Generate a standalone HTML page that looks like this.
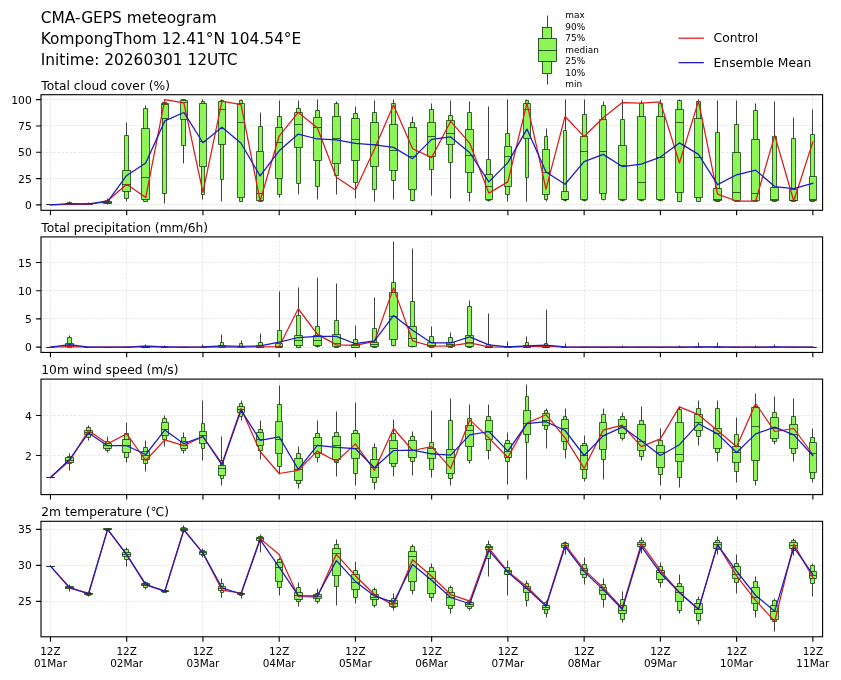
<!DOCTYPE html>
<html lang="en"><head><meta charset="utf-8"><title>CMA-GEPS meteogram</title>
<style>html,body{margin:0;padding:0;background:#fff}body{width:841px;height:680px;overflow:hidden}svg{display:block;will-change:transform}</style>
</head><body>
<svg width="841" height="680" viewBox="0 0 841 680" font-family="'DejaVu Sans', 'Liberation Sans', sans-serif">
<rect width="841" height="680" fill="#fff"/>
<g id="panel1">
<path d="M50.5 210.3V94.7M126.5 210.3V94.7M202.5 210.3V94.7M279.5 210.3V94.7M355.5 210.3V94.7M431.5 210.3V94.7M507.5 210.3V94.7M584.5 210.3V94.7M660.5 210.3V94.7M736.5 210.3V94.7M812.5 210.3V94.7M41 204.5H822.6M41 178.5H822.6M41 152.5H822.6M41 125.5H822.6M41 99.5H822.6" fill="none" stroke="#dcdcdc" stroke-width="0.6" stroke-dasharray="2.8 1.25"/>
<path d="M69.5 204.5V201.5M88.5 204.5V202.5M107.5 204.5V198.5M126.5 201.5V122.5M145.5 201.5V105.5M164.5 203.5V99.5M183.5 163.5V99.5M202.5 199.5V99.5M221.5 201.5V99.5M241.5 201.5V99.5M260.5 201.5V112.5M279.5 197.5V100.5M298.5 194.5V100.5M317.5 199.5V99.5M336.5 194.5V101.5M355.5 198.5V106.5M374.5 201.5V100.5M393.5 199.5V99.5M412.5 201.5V116.5M431.5 195.5V103.5M450.5 198.5V100.5M469.5 201.5V101.5M488.5 201.5V106.5M507.5 201.5V99.5M526.5 201.5V99.5M546.5 201.5V128.5M565.5 201.5V99.5M584.5 201.5V99.5M603.5 200.5V101.5M622.5 201.5V99.5M641.5 201.5V100.5M660.5 201.5V99.5M679.5 201.5V99.5M698.5 201.5V99.5M717.5 201.5V100.5M736.5 201.5V100.5M755.5 201.5V103.5M774.5 201.5V101.5M793.5 201.5V117.5M812.5 201.5V109.5" fill="none" stroke="#404040" stroke-width="1"/>
<path d="M48.5 204.5H52.5V204.5H48.5ZM67.5 202.5H71.5V204.5H67.5ZM86.5 203.5H90.5V204.5H86.5ZM105.5 200.5H109.5V203.5H105.5ZM124.5 135.5H128.5V198.5H124.5ZM143.5 108.5H147.5V201.5H143.5ZM162.5 102.5H166.5V193.5H162.5ZM181.5 99.5H185.5V145.5H181.5ZM201.5 101.5H204.5V194.5H201.5ZM220.5 100.5H223.5V179.5H220.5ZM239.5 100.5H242.5V201.5H239.5ZM258.5 126.5H262.5V201.5H258.5ZM277.5 116.5H281.5V194.5H277.5ZM296.5 108.5H300.5V183.5H296.5ZM315.5 110.5H319.5V186.5H315.5ZM334.5 103.5H338.5V175.5H334.5ZM353.5 113.5H357.5V182.5H353.5ZM372.5 112.5H376.5V189.5H372.5ZM391.5 103.5H395.5V180.5H391.5ZM410.5 122.5H414.5V200.5H410.5ZM429.5 109.5H433.5V169.5H429.5ZM448.5 115.5H452.5V162.5H448.5ZM467.5 112.5H471.5V192.5H467.5ZM486.5 159.5H490.5V200.5H486.5ZM505.5 133.5H509.5V194.5H505.5ZM525.5 100.5H528.5V177.5H525.5ZM544.5 136.5H547.5V199.5H544.5ZM563.5 130.5H566.5V200.5H563.5ZM582.5 114.5H586.5V200.5H582.5ZM601.5 105.5H605.5V199.5H601.5ZM620.5 119.5H624.5V200.5H620.5ZM639.5 103.5H643.5V200.5H639.5ZM658.5 103.5H662.5V200.5H658.5ZM677.5 100.5H681.5V201.5H677.5ZM696.5 101.5H700.5V201.5H696.5ZM715.5 132.5H719.5V201.5H715.5ZM734.5 124.5H738.5V201.5H734.5ZM753.5 110.5H757.5V201.5H753.5ZM772.5 136.5H776.5V201.5H772.5ZM791.5 138.5H795.5V201.5H791.5ZM810.5 134.5H814.5V201.5H810.5Z" fill="#8df558" stroke="#0c3408" stroke-width="0.75"/>
<path d="M46.5 204.5H54.5V204.5H46.5ZM65.5 203.5H73.5V204.5H65.5ZM84.5 203.5H92.5V204.5H84.5ZM103.5 201.5H111.5V203.5H103.5ZM122.5 170.5H130.5V191.5H122.5ZM141.5 128.5H149.5V199.5H141.5ZM161.5 103.5H168.5V118.5H161.5ZM180.5 100.5H187.5V119.5H180.5ZM199.5 103.5H206.5V166.5H199.5ZM218.5 101.5H225.5V144.5H218.5ZM237.5 103.5H244.5V197.5H237.5ZM256.5 151.5H263.5V200.5H256.5ZM275.5 127.5H282.5V178.5H275.5ZM294.5 112.5H302.5V147.5H294.5ZM313.5 117.5H321.5V160.5H313.5ZM332.5 116.5H340.5V163.5H332.5ZM351.5 118.5H359.5V160.5H351.5ZM370.5 122.5H378.5V166.5H370.5ZM389.5 124.5H397.5V170.5H389.5ZM408.5 127.5H416.5V189.5H408.5ZM427.5 122.5H435.5V156.5H427.5ZM446.5 120.5H454.5V144.5H446.5ZM465.5 129.5H473.5V172.5H465.5ZM485.5 174.5H492.5V199.5H485.5ZM504.5 146.5H511.5V186.5H504.5ZM523.5 103.5H530.5V138.5H523.5ZM542.5 149.5H549.5V194.5H542.5ZM561.5 191.5H568.5V199.5H561.5ZM580.5 136.5H587.5V199.5H580.5ZM599.5 119.5H606.5V193.5H599.5ZM618.5 145.5H626.5V199.5H618.5ZM637.5 116.5H645.5V199.5H637.5ZM656.5 116.5H664.5V199.5H656.5ZM675.5 109.5H683.5V192.5H675.5ZM694.5 118.5H702.5V197.5H694.5ZM713.5 188.5H721.5V200.5H713.5ZM732.5 152.5H740.5V200.5H732.5ZM751.5 139.5H759.5V200.5H751.5ZM770.5 187.5H778.5V200.5H770.5ZM789.5 189.5H797.5V200.5H789.5ZM809.5 176.5H816.5V200.5H809.5Z" fill="#8df558" stroke="#0c3408" stroke-width="0.75"/>
<path d="M46.5 204.5H54.5M65.5 203.5H73.5M84.5 204.5H92.5M103.5 202.5H111.5M122.5 184.5H130.5M141.5 177.5H149.5M161.5 104.5H168.5M180.5 102.5H187.5M199.5 141.5H206.5M218.5 109.5H225.5M237.5 122.5H244.5M256.5 193.5H263.5M275.5 142.5H282.5M294.5 124.5H302.5M313.5 127.5H321.5M332.5 138.5H340.5M351.5 139.5H359.5M370.5 144.5H378.5M389.5 150.5H397.5M408.5 156.5H416.5M427.5 136.5H435.5M446.5 133.5H454.5M465.5 155.5H473.5M485.5 186.5H492.5M504.5 156.5H511.5M523.5 109.5H530.5M542.5 172.5H549.5M561.5 199.5H568.5M580.5 151.5H587.5M599.5 151.5H606.5M618.5 165.5H626.5M637.5 182.5H645.5M656.5 157.5H664.5M675.5 122.5H683.5M694.5 157.5H702.5M713.5 199.5H721.5M732.5 192.5H740.5M751.5 193.5H759.5M770.5 199.5H778.5M789.5 200.5H797.5M809.5 199.5H816.5" fill="none" stroke="#0c3408" stroke-width="0.75"/>
<polyline points="50.45,204.9 69.51,204.27 88.57,204.37 107.63,200.69 126.69,184.26 145.75,197.53 164.81,99.6 183.87,102.76 202.93,192.26 221.99,101.18 241.05,104.55 260.11,201 279.17,136.03 298.23,112.45 317.29,127.72 336.35,177.31 355.41,189.95 374.47,149.09 393.53,105.08 412.59,148.78 431.65,157.62 450.71,121.29 469.77,143.3 488.83,193.11 507.89,181.84 526.95,103.18 546.01,189.11 565.07,116.45 584.13,136.56 603.19,117.71 622.25,102.55 641.31,103.18 660.37,101.92 679.43,162.99 698.49,101.18 717.55,194.05 736.61,201 755.67,201 774.73,135.4 793.79,201 812.85,141.93" fill="none" stroke="#dc1a1a" stroke-width="1.25" stroke-linejoin="round" stroke-linecap="square"/>
<polyline points="50.45,204.9 69.51,203.64 88.57,203.85 107.63,201.53 126.69,175.42 145.75,162.99 164.81,120.87 183.87,112.45 202.93,142.77 221.99,127.19 241.05,143.3 260.11,175.94 279.17,150.78 298.23,134.03 317.29,138.98 336.35,139.93 355.41,143.3 374.47,144.88 393.53,147.41 412.59,158.67 431.65,139.4 450.71,136.98 469.77,152.78 488.83,181.84 507.89,162.57 526.95,129.08 546.01,172.05 565.07,184.26 584.13,161.62 603.19,154.36 622.25,166.57 641.31,164.15 660.37,157.09 679.43,142.88 698.49,154.36 717.55,184.58 736.61,174.78 755.67,170.15 774.73,186.58 793.79,188.58 812.85,183.21" fill="none" stroke="#1a1ac8" stroke-width="1.25" stroke-linejoin="round" stroke-linecap="square"/>
<rect x="41" y="94.7" width="781.6" height="115.6" fill="none" stroke="#000" stroke-width="1.11"/>
<path d="M50.45 210.3v4.86M126.69 210.3v4.86M202.93 210.3v4.86M279.17 210.3v4.86M355.41 210.3v4.86M431.65 210.3v4.86M507.89 210.3v4.86M584.13 210.3v4.86M660.37 210.3v4.86M736.61 210.3v4.86M812.85 210.3v4.86M41 204.9h-4.86M41 178.58h-4.86M41 152.25h-4.86M41 125.93h-4.86M41 99.6h-4.86" fill="none" stroke="#000" stroke-width="1.11"/>
<g font-size="10.75" text-anchor="end" fill="#000">
<text x="31.8" y="208.95">0</text>
<text x="31.8" y="182.63">25</text>
<text x="31.8" y="156.3">50</text>
<text x="31.8" y="129.98">75</text>
<text x="31.8" y="103.65">100</text>
</g>
<text x="41.3" y="89.6" font-size="12.25" fill="#000">Total cloud cover (%)</text>
</g>
<g id="panel2">
<path d="M50.5 352.45V236.9M126.5 352.45V236.9M202.5 352.45V236.9M279.5 352.45V236.9M355.5 352.45V236.9M431.5 352.45V236.9M507.5 352.45V236.9M584.5 352.45V236.9M660.5 352.45V236.9M736.5 352.45V236.9M812.5 352.45V236.9M41 347.5H822.6M41 318.5H822.6M41 290.5H822.6M41 262.5H822.6" fill="none" stroke="#dcdcdc" stroke-width="0.6" stroke-dasharray="2.8 1.25"/>
<path d="M69.5 347.5V335.5M145.5 347.5V344.5M164.5 347.5V345.5M202.5 347.5V344.5M221.5 347.5V334.5M241.5 347.5V340.5M260.5 347.5V333.5M279.5 347.5V291.5M298.5 347.5V287.5M317.5 347.5V277.5M336.5 347.5V283.5M355.5 347.5V325.5M374.5 347.5V297.5M393.5 346.5V241.5M412.5 347.5V248.5M431.5 347.5V326.5M450.5 347.5V332.5M469.5 347.5V300.5M488.5 347.5V313.5M507.5 347.5V341.5M526.5 347.5V336.5M546.5 347.5V309.5M565.5 347.5V343.5M622.5 347.5V345.5M679.5 347.5V345.5M698.5 347.5V342.5M717.5 347.5V342.5M755.5 347.5V345.5M774.5 347.5V344.5" fill="none" stroke="#404040" stroke-width="1"/>
<path d="M48.5 347.5H52.5V347.5H48.5ZM67.5 337.5H71.5V347.5H67.5ZM86.5 347.5H90.5V347.5H86.5ZM105.5 347.5H109.5V347.5H105.5ZM124.5 347.5H128.5V347.5H124.5ZM143.5 346.5H147.5V347.5H143.5ZM162.5 346.5H166.5V347.5H162.5ZM181.5 347.5H185.5V347.5H181.5ZM201.5 346.5H204.5V347.5H201.5ZM220.5 342.5H223.5V347.5H220.5ZM239.5 343.5H242.5V347.5H239.5ZM258.5 342.5H262.5V347.5H258.5ZM277.5 330.5H281.5V347.5H277.5ZM296.5 315.5H300.5V347.5H296.5ZM315.5 326.5H319.5V346.5H315.5ZM334.5 320.5H338.5V347.5H334.5ZM353.5 339.5H357.5V347.5H353.5ZM372.5 328.5H376.5V347.5H372.5ZM391.5 282.5H395.5V345.5H391.5ZM410.5 301.5H414.5V346.5H410.5ZM429.5 336.5H433.5V347.5H429.5ZM448.5 337.5H452.5V347.5H448.5ZM467.5 306.5H471.5V347.5H467.5ZM486.5 344.5H490.5V347.5H486.5ZM505.5 346.5H509.5V347.5H505.5ZM525.5 342.5H528.5V347.5H525.5ZM544.5 343.5H547.5V347.5H544.5ZM563.5 346.5H566.5V347.5H563.5ZM582.5 347.5H586.5V347.5H582.5ZM601.5 347.5H605.5V347.5H601.5ZM620.5 347.5H624.5V347.5H620.5ZM639.5 347.5H643.5V347.5H639.5ZM658.5 347.5H662.5V347.5H658.5ZM677.5 347.5H681.5V347.5H677.5ZM696.5 346.5H700.5V347.5H696.5ZM715.5 346.5H719.5V347.5H715.5ZM734.5 347.5H738.5V347.5H734.5ZM753.5 347.5H757.5V347.5H753.5ZM772.5 347.5H776.5V347.5H772.5ZM791.5 347.5H795.5V347.5H791.5ZM810.5 347.5H814.5V347.5H810.5Z" fill="#8df558" stroke="#0c3408" stroke-width="0.75"/>
<path d="M46.5 347.5H54.5V347.5H46.5ZM65.5 343.5H73.5V346.5H65.5ZM84.5 347.5H92.5V347.5H84.5ZM103.5 347.5H111.5V347.5H103.5ZM122.5 347.5H130.5V347.5H122.5ZM141.5 346.5H149.5V347.5H141.5ZM161.5 347.5H168.5V347.5H161.5ZM180.5 347.5H187.5V347.5H180.5ZM199.5 347.5H206.5V347.5H199.5ZM218.5 345.5H225.5V347.5H218.5ZM237.5 346.5H244.5V347.5H237.5ZM256.5 345.5H263.5V347.5H256.5ZM275.5 343.5H282.5V347.5H275.5ZM294.5 335.5H302.5V345.5H294.5ZM313.5 335.5H321.5V345.5H313.5ZM332.5 334.5H340.5V346.5H332.5ZM351.5 344.5H359.5V347.5H351.5ZM370.5 342.5H378.5V346.5H370.5ZM389.5 292.5H397.5V339.5H389.5ZM408.5 326.5H416.5V346.5H408.5ZM427.5 342.5H435.5V346.5H427.5ZM446.5 342.5H454.5V346.5H446.5ZM465.5 335.5H473.5V346.5H465.5ZM485.5 346.5H492.5V347.5H485.5ZM504.5 347.5H511.5V347.5H504.5ZM523.5 345.5H530.5V347.5H523.5ZM542.5 346.5H549.5V347.5H542.5ZM561.5 347.5H568.5V347.5H561.5ZM580.5 347.5H587.5V347.5H580.5ZM599.5 347.5H606.5V347.5H599.5ZM618.5 347.5H626.5V347.5H618.5ZM637.5 347.5H645.5V347.5H637.5ZM656.5 347.5H664.5V347.5H656.5ZM675.5 347.5H683.5V347.5H675.5ZM694.5 347.5H702.5V347.5H694.5ZM713.5 347.5H721.5V347.5H713.5ZM732.5 347.5H740.5V347.5H732.5ZM751.5 347.5H759.5V347.5H751.5ZM770.5 347.5H778.5V347.5H770.5ZM789.5 347.5H797.5V347.5H789.5ZM809.5 347.5H816.5V347.5H809.5Z" fill="#8df558" stroke="#0c3408" stroke-width="0.75"/>
<path d="M46.5 347.5H54.5M65.5 345.5H73.5M84.5 347.5H92.5M103.5 347.5H111.5M122.5 347.5H130.5M141.5 347.5H149.5M161.5 347.5H168.5M180.5 347.5H187.5M199.5 347.5H206.5M218.5 347.5H225.5M237.5 347.5H244.5M256.5 347.5H263.5M275.5 346.5H282.5M294.5 340.5H302.5M313.5 340.5H321.5M332.5 343.5H340.5M351.5 345.5H359.5M370.5 344.5H378.5M389.5 316.5H397.5M408.5 338.5H416.5M427.5 345.5H435.5M446.5 344.5H454.5M465.5 342.5H473.5M485.5 347.5H492.5M504.5 347.5H511.5M523.5 347.5H530.5M542.5 347.5H549.5M561.5 347.5H568.5M580.5 347.5H587.5M599.5 347.5H606.5M618.5 347.5H626.5M637.5 347.5H645.5M656.5 347.5H664.5M675.5 347.5H683.5M694.5 347.5H702.5M713.5 347.5H721.5M732.5 347.5H740.5M751.5 347.5H759.5M770.5 347.5H778.5M789.5 347.5H797.5M809.5 347.5H816.5" fill="none" stroke="#0c3408" stroke-width="0.75"/>
<polyline points="50.45,347.1 69.51,346.54 88.57,347.1 107.63,347.1 126.69,347.1 145.75,345.97 164.81,346.99 183.87,347.1 202.93,347.1 221.99,347.1 241.05,347.1 260.11,346.82 279.17,346.54 298.23,308.75 317.29,334.13 336.35,344.84 355.41,345.41 374.47,341.46 393.53,287.88 412.59,340.9 431.65,346.25 450.71,345.97 469.77,342.98 488.83,346.93 507.89,347.1 526.95,346.54 546.01,346.25 565.07,347.1 584.13,347.1 603.19,347.1 622.25,347.1 641.31,347.1 660.37,347.1 679.43,347.1 698.49,347.1 717.55,347.1 736.61,347.1 755.67,347.1 774.73,347.1 793.79,347.1 812.85,347.1" fill="none" stroke="#dc1a1a" stroke-width="1.25" stroke-linejoin="round" stroke-linecap="square"/>
<polyline points="50.45,347.1 69.51,344.56 88.57,347.1 107.63,347.1 126.69,347.1 145.75,346.65 164.81,346.93 183.87,347.1 202.93,346.93 221.99,345.97 241.05,346.25 260.11,345.97 279.17,342.02 298.23,337.51 317.29,336.38 336.35,336.38 355.41,343.72 374.47,340.9 393.53,315.52 412.59,330.18 431.65,342.98 450.71,342.98 469.77,336.95 488.83,344.84 507.89,346.82 526.95,345.97 546.01,345.13 565.07,346.93 584.13,347.1 603.19,347.1 622.25,347.04 641.31,347.1 660.37,347.1 679.43,347.04 698.49,346.93 717.55,346.93 736.61,347.1 755.67,347.04 774.73,346.99 793.79,347.1 812.85,347.1" fill="none" stroke="#1a1ac8" stroke-width="1.25" stroke-linejoin="round" stroke-linecap="square"/>
<rect x="41" y="236.9" width="781.6" height="115.55" fill="none" stroke="#000" stroke-width="1.11"/>
<path d="M50.45 352.45v4.86M126.69 352.45v4.86M202.93 352.45v4.86M279.17 352.45v4.86M355.41 352.45v4.86M431.65 352.45v4.86M507.89 352.45v4.86M584.13 352.45v4.86M660.37 352.45v4.86M736.61 352.45v4.86M812.85 352.45v4.86M41 347.1h-4.86M41 318.9h-4.86M41 290.7h-4.86M41 262.5h-4.86" fill="none" stroke="#000" stroke-width="1.11"/>
<g font-size="10.75" text-anchor="end" fill="#000">
<text x="31.8" y="351.15">0</text>
<text x="31.8" y="322.95">5</text>
<text x="31.8" y="294.75">10</text>
<text x="31.8" y="266.55">15</text>
</g>
<text x="41.3" y="231.8" font-size="12.25" fill="#000">Total precipitation (mm/6h)</text>
</g>
<g id="panel3">
<path d="M50.5 494.6V379.1M126.5 494.6V379.1M202.5 494.6V379.1M279.5 494.6V379.1M355.5 494.6V379.1M431.5 494.6V379.1M507.5 494.6V379.1M584.5 494.6V379.1M660.5 494.6V379.1M736.5 494.6V379.1M812.5 494.6V379.1M41 455.5H822.6M41 415.5H822.6" fill="none" stroke="#dcdcdc" stroke-width="0.6" stroke-dasharray="2.8 1.25"/>
<path d="M69.5 470.5V453.5M88.5 440.5V425.5M107.5 452.5V436.5M126.5 462.5V422.5M145.5 471.5V440.5M164.5 446.5V415.5M183.5 453.5V432.5M202.5 460.5V400.5M221.5 485.5V436.5M241.5 420.5V400.5M260.5 459.5V420.5M279.5 474.5V385.5M298.5 488.5V446.5M317.5 462.5V420.5M336.5 476.5V411.5M355.5 485.5V402.5M374.5 489.5V443.5M393.5 476.5V419.5M412.5 475.5V431.5M431.5 477.5V410.5M450.5 485.5V398.5M469.5 463.5V404.5M488.5 459.5V404.5M507.5 484.5V432.5M526.5 479.5V384.5M546.5 448.5V408.5M565.5 458.5V408.5M584.5 481.5V435.5M603.5 479.5V408.5M622.5 440.5V412.5M641.5 460.5V406.5M660.5 485.5V428.5M679.5 487.5V406.5M698.5 445.5V400.5M717.5 461.5V400.5M736.5 482.5V417.5M755.5 485.5V393.5M774.5 444.5V396.5M793.5 461.5V398.5M812.5 482.5V428.5" fill="none" stroke="#404040" stroke-width="1"/>
<path d="M48.5 477.5H52.5V477.5H48.5ZM67.5 456.5H71.5V463.5H67.5ZM86.5 427.5H90.5V437.5H86.5ZM105.5 441.5H109.5V450.5H105.5ZM124.5 433.5H128.5V457.5H124.5ZM143.5 447.5H147.5V463.5H143.5ZM162.5 418.5H166.5V439.5H162.5ZM181.5 437.5H185.5V450.5H181.5ZM201.5 423.5H204.5V448.5H201.5ZM220.5 460.5H223.5V478.5H220.5ZM239.5 403.5H242.5V416.5H239.5ZM258.5 429.5H262.5V450.5H258.5ZM277.5 404.5H281.5V466.5H277.5ZM296.5 453.5H300.5V483.5H296.5ZM315.5 433.5H319.5V457.5H315.5ZM334.5 432.5H338.5V462.5H334.5ZM353.5 430.5H357.5V473.5H353.5ZM372.5 447.5H376.5V482.5H372.5ZM391.5 433.5H395.5V466.5H391.5ZM410.5 436.5H414.5V461.5H410.5ZM429.5 442.5H433.5V469.5H429.5ZM448.5 420.5H452.5V478.5H448.5ZM467.5 418.5H471.5V460.5H467.5ZM486.5 416.5H490.5V450.5H486.5ZM505.5 440.5H509.5V461.5H505.5ZM525.5 396.5H528.5V442.5H525.5ZM544.5 410.5H547.5V429.5H544.5ZM563.5 416.5H566.5V449.5H563.5ZM582.5 443.5H586.5V478.5H582.5ZM601.5 414.5H605.5V459.5H601.5ZM620.5 416.5H624.5V438.5H620.5ZM639.5 420.5H643.5V456.5H639.5ZM658.5 440.5H662.5V474.5H658.5ZM677.5 409.5H681.5V477.5H677.5ZM696.5 408.5H700.5V436.5H696.5ZM715.5 408.5H719.5V452.5H715.5ZM734.5 434.5H738.5V471.5H734.5ZM753.5 406.5H757.5V480.5H753.5ZM772.5 412.5H776.5V441.5H772.5ZM791.5 416.5H795.5V453.5H791.5ZM810.5 437.5H814.5V478.5H810.5Z" fill="#8df558" stroke="#0c3408" stroke-width="0.75"/>
<path d="M46.5 477.5H54.5V477.5H46.5ZM65.5 457.5H73.5V462.5H65.5ZM84.5 430.5H92.5V434.5H84.5ZM103.5 443.5H111.5V448.5H103.5ZM122.5 439.5H130.5V452.5H122.5ZM141.5 451.5H149.5V459.5H141.5ZM161.5 422.5H168.5V435.5H161.5ZM180.5 441.5H187.5V448.5H180.5ZM199.5 431.5H206.5V443.5H199.5ZM218.5 465.5H225.5V475.5H218.5ZM237.5 406.5H244.5V412.5H237.5ZM256.5 432.5H263.5V445.5H256.5ZM275.5 421.5H282.5V453.5H275.5ZM294.5 458.5H302.5V480.5H294.5ZM313.5 437.5H321.5V453.5H313.5ZM332.5 436.5H340.5V459.5H332.5ZM351.5 433.5H359.5V458.5H351.5ZM370.5 459.5H378.5V477.5H370.5ZM389.5 440.5H397.5V463.5H389.5ZM408.5 440.5H416.5V457.5H408.5ZM427.5 448.5H435.5V458.5H427.5ZM446.5 449.5H454.5V473.5H446.5ZM465.5 425.5H473.5V446.5H465.5ZM485.5 420.5H492.5V439.5H485.5ZM504.5 443.5H511.5V457.5H504.5ZM523.5 410.5H530.5V434.5H523.5ZM542.5 413.5H549.5V425.5H542.5ZM561.5 419.5H568.5V441.5H561.5ZM580.5 445.5H587.5V469.5H580.5ZM599.5 422.5H606.5V449.5H599.5ZM618.5 419.5H626.5V433.5H618.5ZM637.5 424.5H645.5V450.5H637.5ZM656.5 445.5H664.5V467.5H656.5ZM675.5 422.5H683.5V461.5H675.5ZM694.5 414.5H702.5V430.5H694.5ZM713.5 428.5H721.5V448.5H713.5ZM732.5 446.5H740.5V462.5H732.5ZM751.5 407.5H759.5V460.5H751.5ZM770.5 417.5H778.5V438.5H770.5ZM789.5 424.5H797.5V448.5H789.5ZM809.5 442.5H816.5V472.5H809.5Z" fill="#8df558" stroke="#0c3408" stroke-width="0.75"/>
<path d="M46.5 477.5H54.5M65.5 460.5H73.5M84.5 432.5H92.5M103.5 445.5H111.5M122.5 445.5H130.5M141.5 455.5H149.5M161.5 429.5H168.5M180.5 445.5H187.5M199.5 435.5H206.5M218.5 468.5H225.5M237.5 409.5H244.5M256.5 439.5H263.5M275.5 439.5H282.5M294.5 469.5H302.5M313.5 445.5H321.5M332.5 445.5H340.5M351.5 448.5H359.5M370.5 467.5H378.5M389.5 448.5H397.5M408.5 450.5H416.5M427.5 453.5H435.5M446.5 457.5H454.5M465.5 430.5H473.5M485.5 431.5H492.5M504.5 451.5H511.5M523.5 423.5H530.5M542.5 420.5H549.5M561.5 428.5H568.5M580.5 455.5H587.5M599.5 435.5H606.5M618.5 426.5H626.5M637.5 441.5H645.5M656.5 452.5H664.5M675.5 454.5H683.5M694.5 422.5H702.5M713.5 433.5H721.5M732.5 452.5H740.5M751.5 426.5H759.5M770.5 428.5H778.5M789.5 434.5H797.5M809.5 453.5H816.5" fill="none" stroke="#0c3408" stroke-width="0.75"/>
<polyline points="50.45,477.5 69.51,460.9 88.57,430.5 107.63,443.7 126.69,433.9 145.75,460.5 164.81,439.9 183.87,445.7 202.93,436.5 221.99,463.5 241.05,408.5 260.11,451.5 279.17,473.5 298.23,470.3 317.29,451.1 336.35,461.5 355.41,443.9 374.47,470.3 393.53,428.5 412.59,450.5 431.65,446.7 450.71,468.3 469.77,419.9 488.83,437.9 507.89,457.5 526.95,423.1 546.01,414.7 565.07,437.9 584.13,468.3 603.19,430.1 622.25,425.1 641.31,446.7 660.37,438.9 679.43,406.9 698.49,414.7 717.55,430.5 736.61,446.7 755.67,403.5 774.73,431.5 793.79,428.5 812.85,454.5" fill="none" stroke="#dc1a1a" stroke-width="1.25" stroke-linejoin="round" stroke-linecap="square"/>
<polyline points="50.45,477.5 69.51,459.5 88.57,432.9 107.63,445.7 126.69,445.7 145.75,454.5 164.81,430.1 183.87,443.7 202.93,436.5 221.99,464.9 241.05,410.1 260.11,440.3 279.17,436.9 298.23,469.3 317.29,445.3 336.35,447.3 355.41,448.7 374.47,467.7 393.53,450.5 412.59,450.1 431.65,453.9 450.71,455.1 469.77,434.9 488.83,431.5 507.89,451.1 526.95,423.7 546.01,421.7 565.07,430.5 584.13,455.5 603.19,435.9 622.25,427.1 641.31,440.7 660.37,455.5 679.43,444.7 698.49,423.7 717.55,433.9 736.61,452.5 755.67,433.9 774.73,427.1 793.79,434.9 812.85,455.5" fill="none" stroke="#1a1ac8" stroke-width="1.25" stroke-linejoin="round" stroke-linecap="square"/>
<rect x="41" y="379.1" width="781.6" height="115.5" fill="none" stroke="#000" stroke-width="1.11"/>
<path d="M50.45 494.6v4.86M126.69 494.6v4.86M202.93 494.6v4.86M279.17 494.6v4.86M355.41 494.6v4.86M431.65 494.6v4.86M507.89 494.6v4.86M584.13 494.6v4.86M660.37 494.6v4.86M736.61 494.6v4.86M812.85 494.6v4.86M41 455.5h-4.86M41 415.5h-4.86" fill="none" stroke="#000" stroke-width="1.11"/>
<g font-size="10.75" text-anchor="end" fill="#000">
<text x="31.8" y="459.55">2</text>
<text x="31.8" y="419.55">4</text>
</g>
<text x="41.3" y="374" font-size="12.25" fill="#000">10m wind speed (m/s)</text>
</g>
<g id="panel4">
<path d="M50.5 636.8V521.3M126.5 636.8V521.3M202.5 636.8V521.3M279.5 636.8V521.3M355.5 636.8V521.3M431.5 636.8V521.3M507.5 636.8V521.3M584.5 636.8V521.3M660.5 636.8V521.3M736.5 636.8V521.3M812.5 636.8V521.3M41 601.5H822.6M41 565.5H822.6M41 529.5H822.6" fill="none" stroke="#dcdcdc" stroke-width="0.6" stroke-dasharray="2.8 1.25"/>
<path d="M69.5 591.5V584.5M88.5 596.5V592.5M107.5 530.5V528.5M126.5 566.5V547.5M145.5 589.5V581.5M164.5 592.5V589.5M183.5 532.5V525.5M202.5 557.5V548.5M221.5 597.5V578.5M241.5 598.5V591.5M260.5 552.5V534.5M279.5 595.5V557.5M298.5 606.5V582.5M317.5 603.5V588.5M336.5 605.5V539.5M355.5 603.5V561.5M374.5 607.5V587.5M393.5 610.5V593.5M412.5 594.5V544.5M431.5 601.5V563.5M450.5 613.5V585.5M469.5 610.5V599.5M488.5 576.5V540.5M507.5 595.5V560.5M526.5 606.5V580.5M546.5 617.5V600.5M565.5 554.5V541.5M584.5 584.5V557.5M603.5 607.5V578.5M622.5 622.5V591.5M641.5 553.5V537.5M660.5 587.5V562.5M679.5 613.5V574.5M698.5 624.5V596.5M717.5 554.5V536.5M736.5 593.5V554.5M755.5 617.5V576.5M774.5 631.5V598.5M793.5 555.5V538.5M812.5 596.5V563.5" fill="none" stroke="#404040" stroke-width="1"/>
<path d="M48.5 566.5H52.5V566.5H48.5ZM67.5 586.5H71.5V588.5H67.5ZM86.5 592.5H90.5V595.5H86.5ZM105.5 528.5H109.5V530.5H105.5ZM124.5 549.5H128.5V559.5H124.5ZM143.5 582.5H147.5V587.5H143.5ZM162.5 590.5H166.5V592.5H162.5ZM181.5 527.5H185.5V531.5H181.5ZM201.5 550.5H204.5V555.5H201.5ZM220.5 583.5H223.5V592.5H220.5ZM239.5 592.5H242.5V595.5H239.5ZM258.5 536.5H262.5V541.5H258.5ZM277.5 559.5H281.5V587.5H277.5ZM296.5 587.5H300.5V601.5H296.5ZM315.5 593.5H319.5V601.5H315.5ZM334.5 544.5H338.5V586.5H334.5ZM353.5 570.5H357.5V597.5H353.5ZM372.5 589.5H376.5V605.5H372.5ZM391.5 598.5H395.5V607.5H391.5ZM410.5 546.5H414.5V590.5H410.5ZM429.5 567.5H433.5V597.5H429.5ZM448.5 587.5H452.5V608.5H448.5ZM467.5 601.5H471.5V608.5H467.5ZM486.5 544.5H490.5V558.5H486.5ZM505.5 567.5H509.5V574.5H505.5ZM525.5 583.5H528.5V600.5H525.5ZM544.5 602.5H547.5V613.5H544.5ZM563.5 542.5H566.5V548.5H563.5ZM582.5 564.5H586.5V577.5H582.5ZM601.5 584.5H605.5V599.5H601.5ZM620.5 599.5H624.5V619.5H620.5ZM639.5 540.5H643.5V548.5H639.5ZM658.5 566.5H662.5V582.5H658.5ZM677.5 583.5H681.5V610.5H677.5ZM696.5 599.5H700.5V620.5H696.5ZM715.5 540.5H719.5V549.5H715.5ZM734.5 563.5H738.5V582.5H734.5ZM753.5 581.5H757.5V610.5H753.5ZM772.5 600.5H776.5V621.5H772.5ZM791.5 540.5H795.5V550.5H791.5ZM810.5 565.5H814.5V583.5H810.5Z" fill="#8df558" stroke="#0c3408" stroke-width="0.75"/>
<path d="M46.5 566.5H54.5V566.5H46.5ZM65.5 586.5H73.5V588.5H65.5ZM84.5 593.5H92.5V594.5H84.5ZM103.5 528.5H111.5V529.5H103.5ZM122.5 552.5H130.5V556.5H122.5ZM141.5 583.5H149.5V585.5H141.5ZM161.5 590.5H168.5V591.5H161.5ZM180.5 528.5H187.5V530.5H180.5ZM199.5 551.5H206.5V554.5H199.5ZM218.5 586.5H225.5V590.5H218.5ZM237.5 593.5H244.5V594.5H237.5ZM256.5 537.5H263.5V540.5H256.5ZM275.5 562.5H282.5V581.5H275.5ZM294.5 592.5H302.5V599.5H294.5ZM313.5 594.5H321.5V598.5H313.5ZM332.5 548.5H340.5V575.5H332.5ZM351.5 574.5H359.5V589.5H351.5ZM370.5 594.5H378.5V599.5H370.5ZM389.5 600.5H397.5V606.5H389.5ZM408.5 551.5H416.5V581.5H408.5ZM427.5 571.5H435.5V593.5H427.5ZM446.5 592.5H454.5V605.5H446.5ZM465.5 602.5H473.5V606.5H465.5ZM485.5 546.5H492.5V549.5H485.5ZM504.5 570.5H511.5V574.5H504.5ZM523.5 586.5H530.5V592.5H523.5ZM542.5 605.5H549.5V609.5H542.5ZM561.5 543.5H568.5V547.5H561.5ZM580.5 568.5H587.5V574.5H580.5ZM599.5 587.5H606.5V594.5H599.5ZM618.5 605.5H626.5V613.5H618.5ZM637.5 542.5H645.5V546.5H637.5ZM656.5 570.5H664.5V579.5H656.5ZM675.5 586.5H683.5V601.5H675.5ZM694.5 603.5H702.5V613.5H694.5ZM713.5 542.5H721.5V548.5H713.5ZM732.5 566.5H740.5V578.5H732.5ZM751.5 587.5H759.5V603.5H751.5ZM770.5 605.5H778.5V619.5H770.5ZM789.5 542.5H797.5V548.5H789.5ZM809.5 571.5H816.5V578.5H809.5Z" fill="#8df558" stroke="#0c3408" stroke-width="0.75"/>
<path d="M46.5 566.5H54.5M65.5 587.5H73.5M84.5 593.5H92.5M103.5 529.5H111.5M122.5 554.5H130.5M141.5 584.5H149.5M161.5 591.5H168.5M180.5 529.5H187.5M199.5 552.5H206.5M218.5 588.5H225.5M237.5 593.5H244.5M256.5 538.5H263.5M275.5 567.5H282.5M294.5 595.5H302.5M313.5 596.5H321.5M332.5 553.5H340.5M351.5 582.5H359.5M370.5 597.5H378.5M389.5 603.5H397.5M408.5 556.5H416.5M427.5 578.5H435.5M446.5 597.5H454.5M465.5 604.5H473.5M485.5 547.5H492.5M504.5 571.5H511.5M523.5 588.5H530.5M542.5 607.5H549.5M561.5 545.5H568.5M580.5 570.5H587.5M599.5 590.5H606.5M618.5 610.5H626.5M637.5 544.5H645.5M656.5 572.5H664.5M675.5 592.5H683.5M694.5 609.5H702.5M713.5 544.5H721.5M732.5 574.5H740.5M751.5 597.5H759.5M770.5 611.5H778.5M789.5 545.5H797.5M809.5 575.5H816.5" fill="none" stroke="#0c3408" stroke-width="0.75"/>
<polyline points="50.45,566.12 69.51,588.08 88.57,593.12 107.63,529.4 126.69,554.6 145.75,585.2 164.81,590.96 183.87,529.4 202.93,553.3 221.99,590.02 241.05,593.19 260.11,538.62 279.17,554.6 298.23,596.5 317.29,597.08 336.35,554.31 355.41,575.7 374.47,594.56 393.53,605.36 412.59,559.78 431.65,576.27 450.71,594.56 469.77,601.04 488.83,548.05 507.89,571.59 526.95,586.71 546.01,605.36 565.07,544.52 584.13,569.65 603.19,587.72 622.25,608.24 641.31,543.51 660.37,570.44 679.43,592.54 698.49,609.32 717.55,544.52 736.61,575.91 755.67,600.39 774.73,621.42 793.79,544.09 812.85,577.5" fill="none" stroke="#dc1a1a" stroke-width="1.25" stroke-linejoin="round" stroke-linecap="square"/>
<polyline points="50.45,566.12 69.51,587.36 88.57,593.98 107.63,529.4 126.69,554.6 145.75,584.34 164.81,591.32 183.87,530.12 202.93,552.94 221.99,587.72 241.05,593.98 260.11,539.62 279.17,567.06 298.23,595.64 317.29,595.93 336.35,560.58 355.41,581.38 374.47,595.93 393.53,602.41 412.59,564.54 431.65,580.23 450.71,597.51 469.77,603.78 488.83,550.42 507.89,572.38 526.95,588.66 546.01,606.3 565.07,546.46 584.13,571.59 603.19,589.66 622.25,609.25 641.31,546.46 660.37,572.96 679.43,592.54 698.49,609.32 717.55,544.88 736.61,571.02 755.67,595.5 774.73,611.19 793.79,547.47 812.85,574.33" fill="none" stroke="#1a1ac8" stroke-width="1.25" stroke-linejoin="round" stroke-linecap="square"/>
<rect x="41" y="521.3" width="781.6" height="115.5" fill="none" stroke="#000" stroke-width="1.11"/>
<path d="M50.45 636.8v4.86M126.69 636.8v4.86M202.93 636.8v4.86M279.17 636.8v4.86M355.41 636.8v4.86M431.65 636.8v4.86M507.89 636.8v4.86M584.13 636.8v4.86M660.37 636.8v4.86M736.61 636.8v4.86M812.85 636.8v4.86M41 601.4h-4.86M41 565.4h-4.86M41 529.4h-4.86" fill="none" stroke="#000" stroke-width="1.11"/>
<g font-size="10.75" text-anchor="end" fill="#000">
<text x="31.8" y="605.45">25</text>
<text x="31.8" y="569.45">30</text>
<text x="31.8" y="533.45">35</text>
</g>
<text x="41.3" y="516.2" font-size="12.25" fill="#000">2m temperature (℃)</text>
</g>
<g font-size="10.45" text-anchor="middle" fill="#000">
<text x="50.45" y="654.7">12Z</text><text x="50.45" y="666.5">01Mar</text>
<text x="126.69" y="654.7">12Z</text><text x="126.69" y="666.5">02Mar</text>
<text x="202.93" y="654.7">12Z</text><text x="202.93" y="666.5">03Mar</text>
<text x="279.17" y="654.7">12Z</text><text x="279.17" y="666.5">04Mar</text>
<text x="355.41" y="654.7">12Z</text><text x="355.41" y="666.5">05Mar</text>
<text x="431.65" y="654.7">12Z</text><text x="431.65" y="666.5">06Mar</text>
<text x="507.89" y="654.7">12Z</text><text x="507.89" y="666.5">07Mar</text>
<text x="584.13" y="654.7">12Z</text><text x="584.13" y="666.5">08Mar</text>
<text x="660.37" y="654.7">12Z</text><text x="660.37" y="666.5">09Mar</text>
<text x="736.61" y="654.7">12Z</text><text x="736.61" y="666.5">10Mar</text>
<text x="812.85" y="654.7">12Z</text><text x="812.85" y="666.5">11Mar</text>
</g>
<g font-size="15.4" fill="#000">
<text x="40.8" y="22.9">CMA-GEPS meteogram</text>
<text x="40.8" y="43.6">KompongThom 12.41°N 104.54°E</text>
<text x="40.8" y="64.9">Initime: 20260301 12UTC</text>
</g>
<g id="legendbox">
<path d="M547.5 15.6V84.6" stroke="#404040" stroke-width="1" fill="none"/>
<rect x="542.5" y="27.5" width="9" height="46" fill="#8df558" stroke="#0c3408" stroke-width="0.8"/>
<rect x="538.5" y="38.5" width="18" height="23" fill="#8df558" stroke="#0c3408" stroke-width="0.8"/>
<path d="M538.5 50.5H556.5" stroke="#0c3408" stroke-width="0.8" fill="none"/>
<g font-size="8.96" fill="#000">
<text x="565.3" y="18.2">max</text>
<text x="565.3" y="29.7">90%</text>
<text x="565.3" y="41.1">75%</text>
<text x="565.3" y="52.8">median</text>
<text x="565.3" y="63.8">25%</text>
<text x="565.3" y="75.8">10%</text>
<text x="565.3" y="86.8">min</text>
</g></g>
<path d="M678.5 38.2H703.8" stroke="#dc1a1a" stroke-width="1.25" fill="none"/>
<path d="M678.5 62.65H703.8" stroke="#1a1ac8" stroke-width="1.25" fill="none"/>
<g font-size="12.3" fill="#000"><text x="713.6" y="41.9">Control</text><text x="713.6" y="66.8">Ensemble Mean</text></g>
</svg>
</body></html>
